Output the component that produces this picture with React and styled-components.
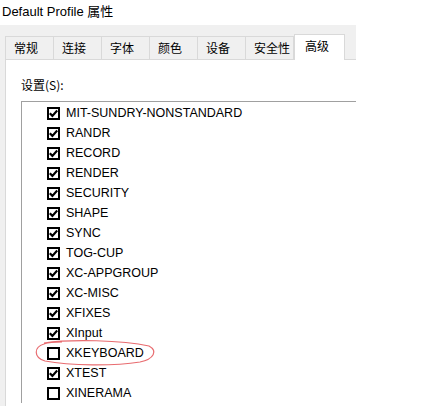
import React from 'react'
import styled, { createGlobalStyle } from 'styled-components'

const GlobalStyle = createGlobalStyle`
  html, body {
    margin: 0;
    padding: 0;
    background: #ffffff;
  }
  * {
    box-sizing: border-box;
  }
`

const Screen = styled.div`
  position: relative;
  width: 423px;
  height: 406px;
  overflow: hidden;
  background: #ffffff;
  font-family: 'Liberation Sans', 'Noto Sans CJK SC', sans-serif;
  color: #000000;
`

const TitleBar = styled.div`
  height: 25px;
  padding: 4px 0 0 2px;
  font-size: 13px;
  line-height: 16px;
  color: #000000;
  white-space: nowrap;
`

const Dialog = styled.div`
  width: 356px;
  height: 381px;
  background: #f0f0f0;
  padding-left: 5px;
  display: flex;
  flex-direction: column;
`

const TabStrip = styled.div`
  height: 34px;
  display: flex;
  align-items: flex-end;
  position: relative;
  z-index: 1;
`

const Tab = styled.div`
  width: ${(p) => p.$w}px;
  height: ${(p) => (p.$active ? 26 : 23)}px;
  margin-bottom: ${(p) => (p.$active ? -1 : 0)}px;
  padding-left: ${(p) => (p.$active ? 10 : 8)}px;
  background: ${(p) => (p.$active ? '#ffffff' : '#f0f0f0')};
  border: 1px solid #d9d9d9;
  border-bottom: none;
  border-left: ${(p) => (p.$first || p.$active ? '1px solid #d9d9d9' : 'none')};
  font-family: 'Noto Sans CJK SC', sans-serif;
  font-size: 12px;
  line-height: ${(p) => (p.$active ? 22 : 21)}px;
  color: #000000;
  white-space: nowrap;
`

const Panel = styled.div`
  flex: 1;
  background: #ffffff;
  border-top: 1px solid #d9d9d9;
  border-left: 1px solid #d9d9d9;
  padding: 17px 0 0 15px;
  overflow: hidden;
`

const Label = styled.div`
  font-family: 'Noto Sans CJK SC', sans-serif;
  font-size: 12px;
  line-height: 16px;
  height: 16px;
  margin-bottom: 8px;
  white-space: nowrap;
`

const ListBox = styled.div`
  width: 360px;
  border-top: 1px solid #a0a0a0;
  border-left: 1px solid #a0a0a0;
  padding: 1px 0 0 25px;
`

const Row = styled.div`
  height: 20px;
  display: flex;
  align-items: center;
  gap: 6px;
  font-size: 12.5px;
  color: #000000;
  white-space: nowrap;
`

const Box = styled.span`
  width: 13px;
  height: 13px;
  border: 2px solid #000000;
  background: #ffffff;
  display: flex;
  align-items: center;
  justify-content: center;
  flex-shrink: 0;
`

const Marker = styled.svg`
  position: absolute;
  left: 0;
  top: 0;
  pointer-events: none;
`

const tabs = [
  { name: '常规', w: 49, first: true },
  { name: '连接', w: 48 },
  { name: '字体', w: 48 },
  { name: '颜色', w: 48 },
  { name: '设备', w: 48 },
  { name: '安全性', w: 48 },
  { name: '高级', w: 51, active: true },
]

const extensions = [
  ['MIT-SUNDRY-NONSTANDARD', true],
  ['RANDR', true],
  ['RECORD', true],
  ['RENDER', true],
  ['SECURITY', true],
  ['SHAPE', true],
  ['SYNC', true],
  ['TOG-CUP', true],
  ['XC-APPGROUP', true],
  ['XC-MISC', true],
  ['XFIXES', true],
  ['XInput', true],
  ['XKEYBOARD', false],
  ['XTEST', true],
  ['XINERAMA', false],
]

const Check = ({ on }) => (
  <Box>
    {on && (
      <svg width="9" height="9" viewBox="0 0 9 9">
        <path d="M0.8 4.3 L3.4 6.9 L8.2 1.6" fill="none" stroke="#000" strokeWidth="2.2" />
      </svg>
    )}
  </Box>
)

const App = () => {
  return (
    <Screen>
      <GlobalStyle />
      <TitleBar>Default Profile 属性</TitleBar>
      <Dialog>
        <TabStrip>
          {tabs.map((t) => (
            <Tab key={t.name} $w={t.w} $first={t.first} $active={t.active}>
              {t.name}
            </Tab>
          ))}
        </TabStrip>
        <Panel>
          <Label>设置(S):</Label>
          <ListBox>
            {extensions.map(([name, on]) => (
              <Row key={name}>
                <Check on={on} />
                {name}
              </Row>
            ))}
          </ListBox>
        </Panel>
      </Dialog>
      {/* hand-drawn red ring around XKEYBOARD */}
      <Marker width="423" height="406" viewBox="0 0 423 406">
        <path
          d="M44 343 C70 339 122 340 149 346 C158 351 154 359 140 362 C115 366 70 366 45 361 C33 357 34 347 44 344 C50 342 56 342 62 342"
          fill="none"
          stroke="#e86c70"
          strokeWidth="1.2"
        />
      </Marker>
    </Screen>
  )
}

export default App
